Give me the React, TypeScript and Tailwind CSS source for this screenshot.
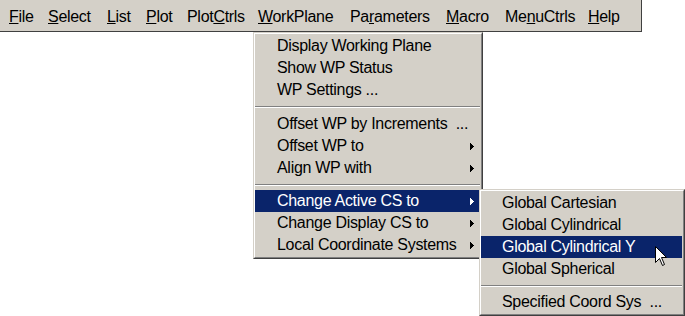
import React from "react";

const Arrow = ({ white }: { white?: boolean }) => (
  <svg width="4" height="7" viewBox="0 0 4 7" shapeRendering="crispEdges" className="mr-[6px] shrink-0">
    <path d="M0 0h1v1h1v1h1v1h1v1h-1v1h-1v1h-1v1h-1z" fill={white ? "#ffffff" : "#000000"} />
  </svg>
);

type Item = { label: string; sub?: boolean; active?: boolean } | "sep" | "sep11";

const Menu = ({ items, pl }: { items: Item[]; pl: string }) => (
  <div className="border border-t-[#d4d0c8] border-l-[#d4d0c8] border-r-[#404040] border-b-[#404040] bg-[#d4d0c8]">
    <div className="border border-t-white border-l-white border-r-[#808080] border-b-[#808080] py-[1px] pr-[1px]">
      {items.map((it, i) => {
        if (it === "sep" || it === "sep11") {
          return (
            <div key={i} className={it === "sep" ? "h-[12px] pt-[5px]" : "h-[11px] pt-[5px]"}>
              <div className="h-[1px] bg-[#808080]" />
              <div className="h-[1px] bg-white" />
            </div>
          );
        }
        return (
          <div
            key={i}
            className={`h-[22px] flex items-center whitespace-pre leading-[22px] ${pl} ${
              it.active ? "bg-[#0a246a] text-white" : "text-black"
            }`}
          >
            <span className="flex-1">{it.label}</span>
            {it.sub && <Arrow white={it.active} />}
          </div>
        );
      })}
    </div>
  </div>
);

const barItems: { a: string; u: string; b: string; w: string }[] = [
  { a: "", u: "F", b: "ile", w: "w-[39px]" },
  { a: "", u: "S", b: "elect", w: "w-[59px]" },
  { a: "", u: "L", b: "ist", w: "w-[39px]" },
  { a: "", u: "P", b: "lot", w: "w-[41px]" },
  { a: "Plot", u: "C", b: "trls", w: "w-[71px]" },
  { a: "", u: "W", b: "orkPlane", w: "w-[92px]" },
  { a: "Pa", u: "r", b: "ameters", w: "w-[96px]" },
  { a: "", u: "M", b: "acro", w: "w-[59px]" },
  { a: "Me", u: "n", b: "uCtrls", w: "w-[83px]" },
  { a: "", u: "H", b: "elp", w: "w-[45px]" },
];

export default function App() {
  return (
    <div className="relative w-[685px] h-[316px] bg-white overflow-hidden font-['Liberation_Sans',Arial,sans-serif] text-[16px] tracking-[-0.3px] text-black">
      <div className="flex h-[32px] w-[642px] bg-[#d4d0c8] border-b border-r border-[#404040] pl-[9px]">
        {barItems.map((it, i) => (
          <div key={i} className={`${it.w} shrink-0 pt-[3px] leading-[28px] whitespace-pre`}>
            {it.a}
            <span className="underline">{it.u}</span>
            {it.b}
          </div>
        ))}
      </div>

      <div className="absolute left-[253px] top-[32px] w-[230px]">
        <Menu
          pl="pl-[22px]"
          items={[
            { label: "Display Working Plane" },
            { label: "Show WP Status" },
            { label: "WP Settings ..." },
            "sep",
            { label: "Offset WP by Increments  ..." },
            { label: "Offset WP to", sub: true },
            { label: "Align WP with", sub: true },
            "sep11",
            { label: "Change Active CS to", sub: true, active: true },
            { label: "Change Display CS to", sub: true },
            { label: "Local Coordinate Systems", sub: true },
          ]}
        />
      </div>

      <div className="absolute left-[479px] top-[189px] w-[206px]">
        <Menu
          pl="pl-[21px]"
          items={[
            { label: "Global Cartesian" },
            { label: "Global Cylindrical" },
            { label: "Global Cylindrical Y", active: true },
            { label: "Global Spherical" },
            "sep11",
            { label: "Specified Coord Sys  ..." },
          ]}
        />
      </div>

      <svg className="absolute left-[655px] top-[246px]" width="13" height="21" viewBox="0 0 13 21">
        <path
          d="M0.5 0.5 V16.5 L4.5 12.5 L7.5 19.5 L9.5 18.5 L6.5 11.5 H11.5 Z"
          fill="#ffffff"
          stroke="#000000"
          strokeWidth="1"
        />
      </svg>
    </div>
  );
}
